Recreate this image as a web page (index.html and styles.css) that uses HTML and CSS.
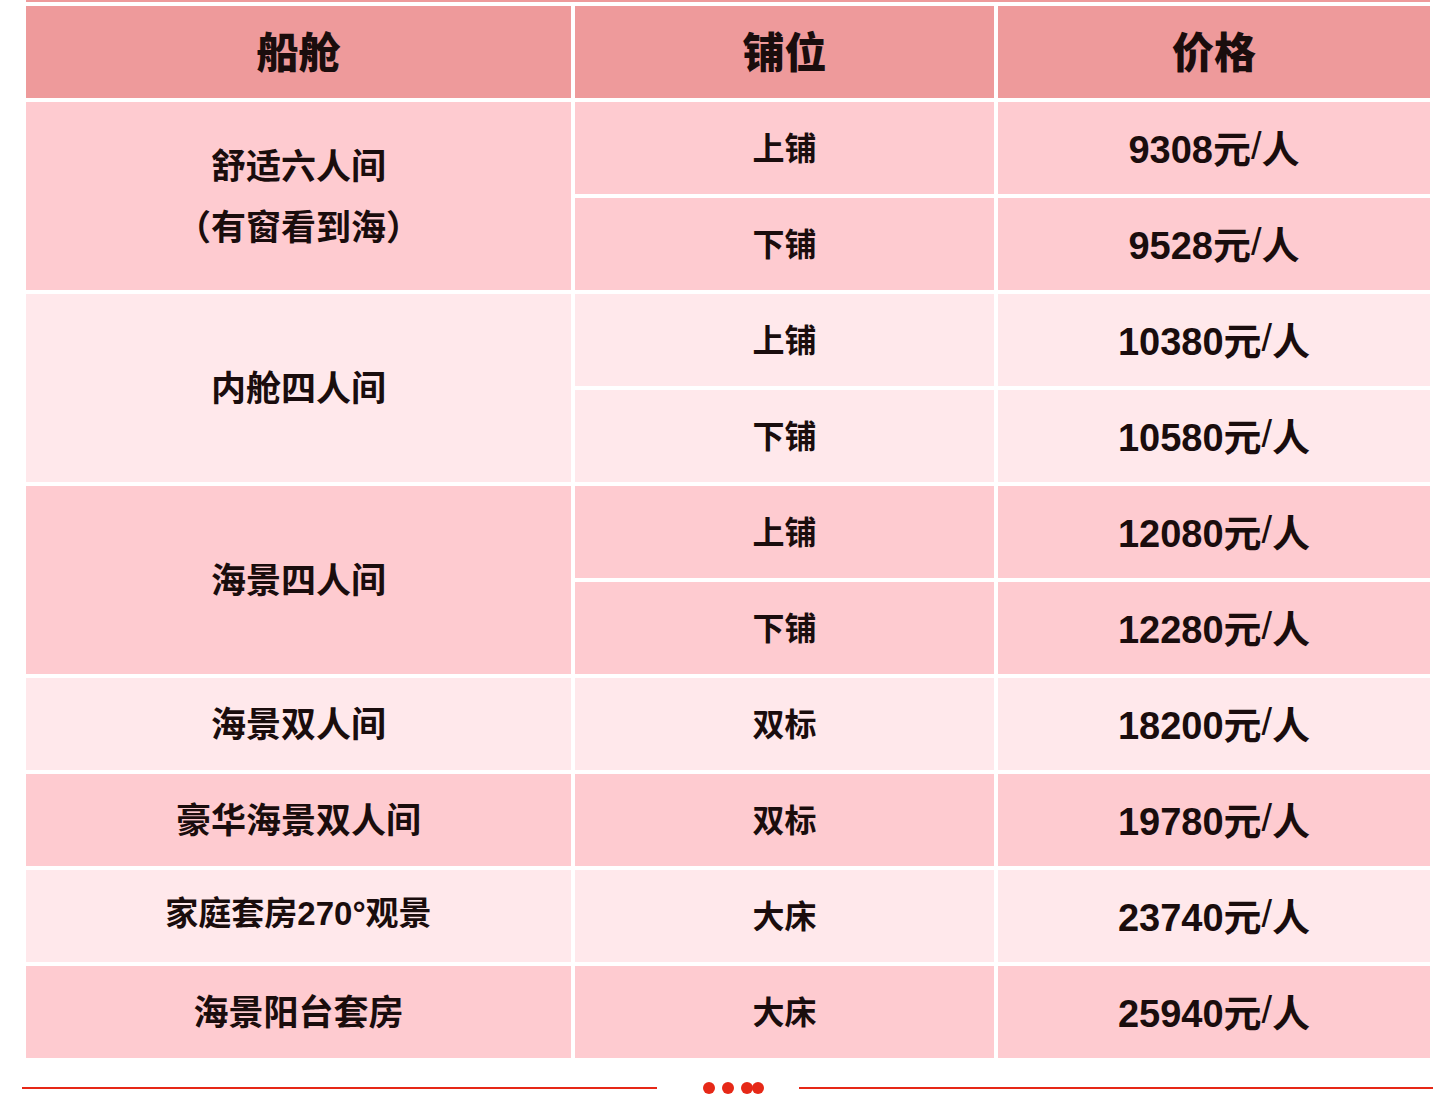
FILE: index.html
```html
<!DOCTYPE html>
<html lang="zh-CN">
<head>
<meta charset="utf-8">
<title>船舱价格</title>
<link rel="stylesheet" href="styles.css">
</head>
<body>
<div class="page">
  <div class="top-stripe"></div>
  <div class="price-table">
    <div class="cell head">船舱</div>
    <div class="cell head">铺位</div>
    <div class="cell head">价格</div>

    <div class="cell pink cabin span2">舒适六人间<br>（有窗看到海）</div>
    <div class="cell pink berth">上铺</div>
    <div class="cell pink price">9308元<span class="slash">/</span>人</div>
    <div class="cell pink berth">下铺</div>
    <div class="cell pink price">9528元<span class="slash">/</span>人</div>

    <div class="cell light cabin span2">内舱四人间</div>
    <div class="cell light berth">上铺</div>
    <div class="cell light price">10380元<span class="slash">/</span>人</div>
    <div class="cell light berth">下铺</div>
    <div class="cell light price">10580元<span class="slash">/</span>人</div>

    <div class="cell pink cabin span2">海景四人间</div>
    <div class="cell pink berth">上铺</div>
    <div class="cell pink price">12080元<span class="slash">/</span>人</div>
    <div class="cell pink berth">下铺</div>
    <div class="cell pink price">12280元<span class="slash">/</span>人</div>

    <div class="cell light cabin">海景双人间</div>
    <div class="cell light berth">双标</div>
    <div class="cell light price">18200元<span class="slash">/</span>人</div>

    <div class="cell pink cabin">豪华海景双人间</div>
    <div class="cell pink berth">双标</div>
    <div class="cell pink price">19780元<span class="slash">/</span>人</div>

    <div class="cell light cabin small">家庭套房270°观景</div>
    <div class="cell light berth">大床</div>
    <div class="cell light price">23740元<span class="slash">/</span>人</div>

    <div class="cell pink cabin">海景阳台套房</div>
    <div class="cell pink berth">大床</div>
    <div class="cell pink price">25940元<span class="slash">/</span>人</div>
  </div>
  <div class="divider">
    <span class="line line-left"></span>
    <span class="dots">
      <span class="dot"></span>
      <span class="dot"></span>
      <span class="dot"></span>
      <span class="dot dot-overlap"></span>
    </span>
    <span class="line line-right"></span>
  </div>
</div>
</body>
</html>
```
FILE: styles.css
```css
html, body {
  margin: 0;
  padding: 0;
  background: #ffffff;
}

.page {
  width: 1439px;
  font-family: "Liberation Sans", "Noto Sans CJK SC", sans-serif;
  color: #1a0d0d;
}

.top-stripe {
  margin-left: 26px;
  width: 1404px;
  height: 2px;
  background: #ee9a9b;
  margin-bottom: 4px;
}

.price-table {
  margin-left: 26px;
  width: 1404px;
  display: grid;
  grid-template-columns: 545px 419px 432px;
  grid-auto-rows: 92px;
  gap: 4px;
}

.cell {
  display: flex;
  align-items: center;
  justify-content: center;
  text-align: center;
  font-weight: 700;
  box-sizing: border-box;
  padding-bottom: 5px;
}

.head {
  background: #ee9a9b;
  font-family: "Noto Sans CJK SC", sans-serif;
  font-size: 42px;
  font-weight: 900;
  padding-bottom: 6px;
}

.pink {
  background: #fecbd0;
}

.light {
  background: #ffe8eb;
}

.span2 {
  grid-row: span 2;
}

.cabin {
  font-family: "Noto Sans CJK SC", sans-serif;
  font-size: 35px;
  line-height: 61px;
}

.cabin.small {
  font-family: "Liberation Sans", "Noto Sans CJK SC", sans-serif;
  font-size: 33px;
}

.berth {
  font-family: "Noto Sans CJK SC", sans-serif;
  font-size: 32px;
}

.price {
  font-size: 38px;
  padding-bottom: 3px;
}

.slash {
  font-weight: 400;
}

.divider {
  margin-top: 24px;
  margin-left: 22px;
  width: 1411px;
  height: 12px;
  display: flex;
  align-items: center;
}

.line {
  height: 2px;
  background: #e62817;
}

.line-left {
  width: 635px;
}

.line-right {
  flex: 1;
}

.dots {
  display: flex;
  margin: 0 35px 0 46px;
}

.dot {
  width: 12px;
  height: 12px;
  border-radius: 50%;
  background: #e62817;
  margin-right: 7px;
}

.dot:nth-child(3) {
  margin-right: 0;
}

.dot-overlap {
  margin-left: -1px;
  margin-right: 0;
}
```
